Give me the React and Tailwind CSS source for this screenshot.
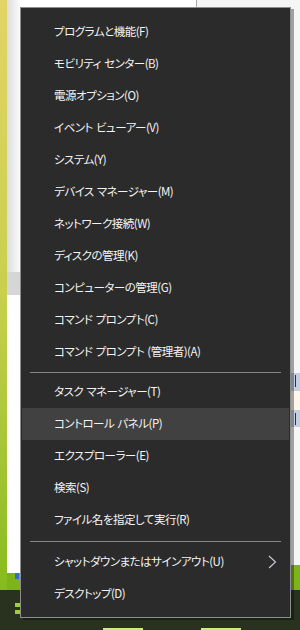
import React from "react";

const groups = [
  [
    "プログラムと機能(F)",
    "モビリティ センター(B)",
    "電源オプション(O)",
    "イベント ビューアー(V)",
    "システム(Y)",
    "デバイス マネージャー(M)",
    "ネットワーク接続(W)",
    "ディスクの管理(K)",
    "コンピューターの管理(G)",
    "コマンド プロンプト(C)",
    "コマンド プロンプト (管理者)(A)",
  ],
  [
    "タスク マネージャー(T)",
    "コントロール パネル(P)",
    "エクスプローラー(E)",
    "検索(S)",
    "ファイル名を指定して実行(R)",
  ],
  ["シャットダウンまたはサインアウト(U)", "デスクトップ(D)"],
];

function Item({ label, active, submenu }) {
  return (
    <div
      className={`mx-px flex h-8 items-center pl-[32px] pr-[12px] ${active ? "bg-[#414141]" : ""}`}
    >
      <span className="flex-1 whitespace-pre text-[11.5px] leading-none tracking-[-0.5px] text-[#f4f4f4] [word-spacing:1px]">{label}</span>
      {submenu && (
        <svg width="9" height="14" viewBox="0 0 9 14" className="block">
          <path d="M1 1 L7.5 7 L1 13" fill="none" stroke="#c9cdd6" strokeWidth="1.1" />
        </svg>
      )}
    </div>
  );
}

function Separator({ h }) {
  return (
    <div className={`flex items-center px-[9px] ${h}`}>
      <div className="h-px w-full bg-[#858585]" />
    </div>
  );
}

export default function App() {
  return (
    <div
      className="relative flex h-[630px] w-[300px] flex-col overflow-hidden bg-white [font-feature-settings:'palt']"
      style={{ fontFamily: '"Noto Sans CJK JP", "Noto Sans", sans-serif' }}
    >
      {/* desktop behind the menu */}
      <div className="flex h-[590px]">
        <div className="w-[7px] bg-gradient-to-b from-[#e2d466] via-[#c8d04c] to-[#86bb1c]" />
        <div className="flex w-[13px] flex-col">
          <div className="h-[272px] bg-gradient-to-r from-[#dcdcdc] to-[#fbfbfb]" />
          <div className="h-[23px] bg-[#d6d6d6]" />
          <div className="h-[278px] bg-white" />
          <div className="flex flex-1 items-start bg-[#7cb419] pl-2">
            <div className="h-[6px] w-[4px] bg-[#3a6fc0]" />
          </div>
        </div>
        <div className="flex flex-1 flex-col">
          <div className="flex h-[7px]">
            <div className="w-[176px] bg-white" />
            <div className="w-px bg-[#a8a8a8]" />
            <div className="flex-1 bg-[#f4f4f4]" />
          </div>
          <div className="flex-1" />
        </div>
        <div className="flex w-[9px] flex-col bg-[#f6f6f6]">
          <div className="h-[373px]" />
          <div className="flex h-[18px] justify-end bg-[#c3cee0] pr-1 pt-[2px]">
            <div className="h-[12px] w-px bg-[#1c2f55]" />
          </div>
          <div className="h-[19px] bg-[#fdf7ec]" />
          <div className="flex h-[17px] justify-end bg-[#c3cee0] pr-1 pt-[3px]">
            <div className="h-[12px] w-px bg-[#1c2f55]" />
          </div>
          <div className="flex-1" />
          <div className="h-[25px] bg-[#7cb419]" />
        </div>
      </div>
      <div className="relative flex flex-1 bg-[#28321f]">
        <div className="ml-[15px] mt-[13px] flex flex-col gap-[3px]">
          <div className="h-[4px] w-[5px] bg-[#9ccf3a]" />
          <div className="h-[4px] w-[5px] bg-[#9ccf3a]" />
        </div>
        <div className="ml-[83px] mt-auto h-[2px] w-[40px] bg-[#c8f07a]" />
        <div className="ml-[58px] mt-auto h-[2px] w-[40px] bg-[#c8f07a]" />
      </div>

      {/* context menu */}
      <div className="absolute left-[20px] top-[7px] flex h-[611px] w-[271px] flex-col border border-[#8d8d8d] bg-[#2b2b2b] pt-2 shadow-[3px_2px_0_rgba(0,0,0,0.35)]">
        {groups[0].map((t) => (
          <Item key={t} label={t} />
        ))}
        <Separator h="h-2" />
        {groups[1].map((t) => (
          <Item key={t} label={t} active={t.startsWith("コントロール")} />
        ))}
        <Separator h="h-[10px]" />
        {groups[2].map((t, i) => (
          <Item key={t} label={t} submenu={i === 0} />
        ))}
      </div>
    </div>
  );
}
